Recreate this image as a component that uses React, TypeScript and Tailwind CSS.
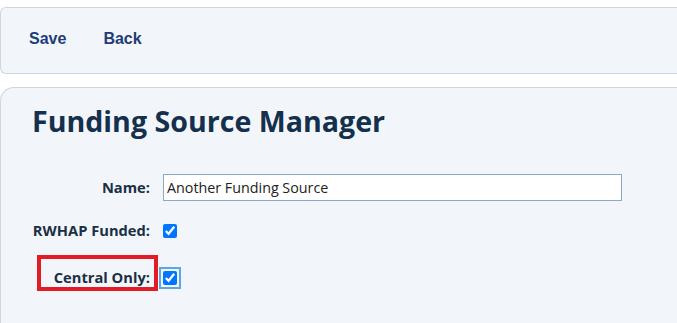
import React from 'react';

const labelCls = "w-[149px] shrink-0 text-right text-[14.7px] font-bold text-[#1b2f45] font-['Open_Sans',sans-serif]";

export default function App() {
  return (
    <div className="h-[323px] w-[677px] overflow-hidden bg-white">
      <div className="mt-[7px] flex h-[67px] items-center gap-[37px] rounded-l-[6px] border border-r-0 border-[#cdd7e2] bg-[#f2f6fb] pb-[4px] pl-[28px] font-['Liberation_Sans',Arial,sans-serif] text-[16px] font-bold text-[#1f3c78]">
        <button type="button" className="cursor-pointer">Save</button>
        <button type="button" className="cursor-pointer">Back</button>
      </div>

      <div className="mt-[13px] h-[300px] rounded-tl-[14px] border-l border-t border-[#cdd7e2] bg-[#f2f6fb] pl-[31px] pt-[15px]">
        <h1 className="font-['Open_Sans',sans-serif] text-[28.6px] font-bold leading-[36px] text-[#14304d]">
          Funding Source Manager
        </h1>

        <div className="mt-[35px] flex flex-col">
          <div className="flex h-[27px] items-center">
            <span className={labelCls + " ml-[-31px]"}>Name:</span>
            <input
              type="text"
              defaultValue="Another Funding Source"
              className="ml-[13px] h-[27px] w-[459px] border border-[#8fa8c4] bg-white px-[3px] font-['Open_Sans',sans-serif] text-[14.3px] text-[#222] outline-none"
            />
          </div>

          <div className="mt-[16px] flex h-[27px] items-center">
            <span className={labelCls + " ml-[-31px]"}>RWHAP Funded:</span>
            <input type="checkbox" defaultChecked className="ml-[13px] h-[14px] w-[14px]" />
          </div>

          <div className="mt-[20px] flex h-[27px] items-center">
            <span className={labelCls + " relative ml-[-31px]"}>
              Central Only:
              <span className="absolute left-[36px] top-[-11px] h-[36px] w-[121px] border-[4px] border-[#e31b23]"></span>
            </span>
            <input
              type="checkbox"
              defaultChecked
              className="ml-[13px] h-[14px] w-[14px] outline outline-2 outline-offset-[2px] outline-[#5ea5e6]"
            />
          </div>
        </div>
      </div>
    </div>
  );
}
